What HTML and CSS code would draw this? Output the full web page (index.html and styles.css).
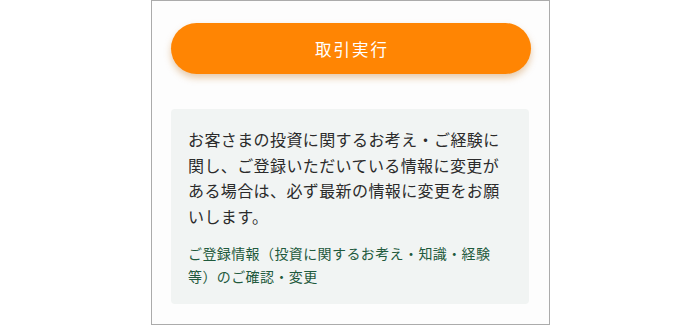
FILE: index.html
```html
<!DOCTYPE html>
<html lang="ja">
<head>
<meta charset="utf-8">
<link rel="stylesheet" href="styles.css">
</head>
<body>
<div class="frame">
  <button class="trade-btn">取引実行</button>
  <div class="notice">
    <p class="notice-text">お客さまの投資に関するお考え・ご経験に関し、ご登録いただいている情報に変更がある場合は、必ず最新の情報に変更をお願いします。</p>
    <a class="notice-link" href="#">ご登録情報（投資に関するお考え・知識・経験等）のご確認・変更</a>
  </div>
</div>
</body>
</html>
```

FILE: styles.css
```css
html, body {
  margin: 0;
  padding: 0;
  background: #ffffff;
}
body {
  width: 700px;
  height: 325px;
  overflow: hidden;
  font-family: "Noto Sans CJK JP", "Noto Sans", sans-serif;
}
.frame {
  box-sizing: border-box;
  width: 399px;
  height: 325px;
  margin-left: 151px;
  border: 1px solid #ababab;
  background: #fdfdfd;
  padding: 22px 18px 0 19px;
  display: flex;
  flex-direction: column;
}
.trade-btn {
  display: block;
  width: 100%;
  height: 51px;
  border: none;
  border-radius: 26px;
  background: #ff8503;
  color: #ffffff;
  font-family: "Noto Sans CJK JP", "Noto Sans", sans-serif;
  font-size: 16.5px;
  font-weight: 400;
  letter-spacing: 2px;
  padding: 0 0 0 2px;
  box-shadow: 0 4px 7px rgba(190, 110, 20, 0.35);
}
.notice {
  margin-top: 35px;
  box-sizing: border-box;
  height: 195px;
  width: 358px;
  background: #f1f4f3;
  border-radius: 4px;
  padding: 18px 17px 18px 17px;
}
.notice-text {
  margin: 0;
  font-size: 16px;
  letter-spacing: 0.4px;
  line-height: 25.6px;
  color: #2b2b2b;
}
.notice-link {
  display: block;
  margin-top: 13px;
  font-size: 14px;
  letter-spacing: 0.4px;
  line-height: 23px;
  color: #1f5a3d;
  text-decoration: none;
}
```
